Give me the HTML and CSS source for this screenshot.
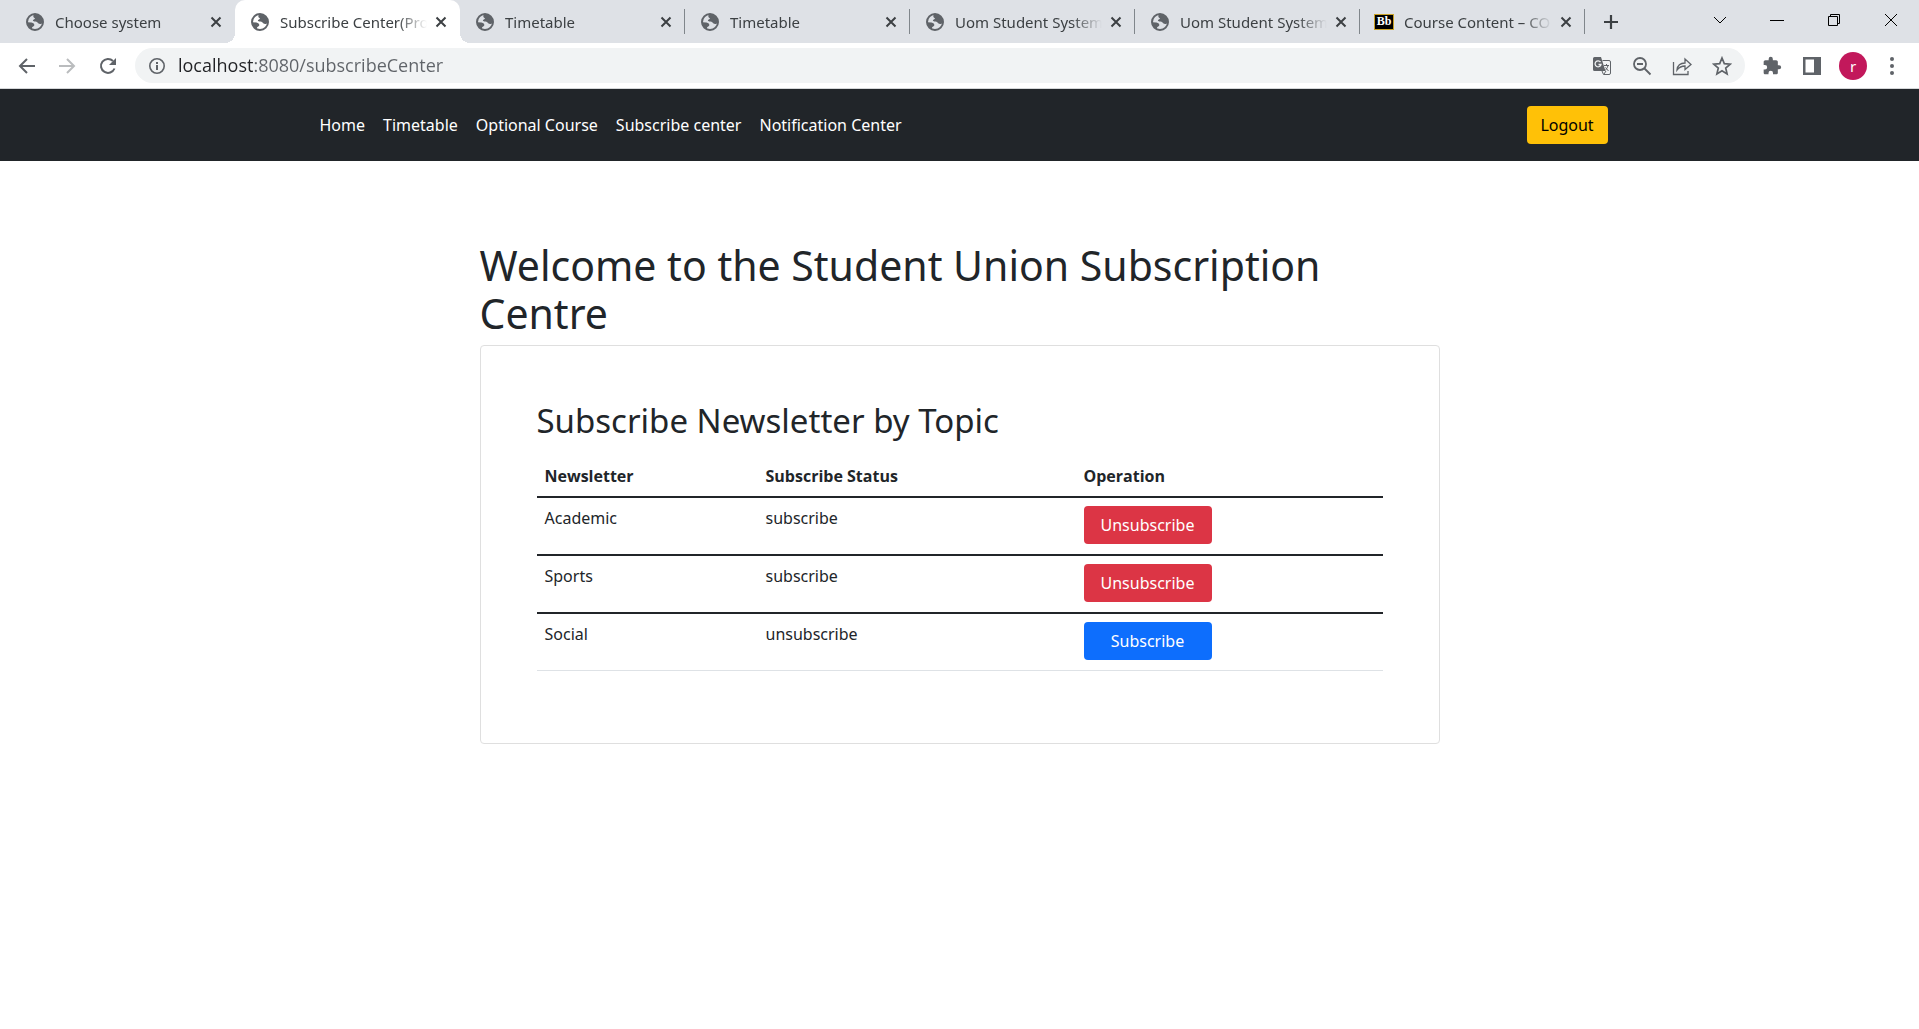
FILE: index.html
```html
<!DOCTYPE html>
<html lang="en">
<head>
<meta charset="utf-8">
<title>Subscribe Center</title>
<link rel="stylesheet" href="styles.css">
</head>
<body>
<svg class="defs" aria-hidden="true">
  <symbol id="globe" viewBox="0 0 18 18">
    <circle cx="9" cy="9" r="8" fill="none" stroke="currentColor" stroke-width="2"/>
    <path fill="currentColor" d="M8 1.500C6.800 3 7.200 4.500 8.800 5.200C9.500 5.600 8.200 6.500 7 7C6.500 8 8 8.600 9.500 8.500C11 8.600 11.500 9.600 12.500 10.600C14 11.600 15.600 11 16.800 9.500C17 5 14 1.500 8 1.500ZM1.500 9.200L5.500 9.500C7.500 10 8.500 11 8.300 12.200C8 13.400 6.400 13.500 6 14.500L6.200 16.400C3 15.500 1.200 12.500 1.500 9.200Z"/>
  </symbol>
  <symbol id="cross" viewBox="0 0 12 12">
    <path d="M1.500 1.500l9 9M10.500 1.500l-9 9" fill="none" stroke="currentColor" stroke-width="2"/>
  </symbol>
</svg>
<header class="browser">
  <div class="tabstrip">
    <div class="tab"><svg class="favicon"><use href="#globe"/></svg><a class="tab-title" href="#">Choose system</a><button class="tab-close" aria-label="Close"><svg><use href="#cross"/></svg></button></div>
    <div class="tab active"><svg class="favicon"><use href="#globe"/></svg><a class="tab-title" href="#">Subscribe Center(Pro</a><button class="tab-close" aria-label="Close"><svg><use href="#cross"/></svg></button></div>
    <div class="tab divided"><svg class="favicon"><use href="#globe"/></svg><a class="tab-title" href="#">Timetable</a><button class="tab-close" aria-label="Close"><svg><use href="#cross"/></svg></button></div>
    <div class="tab divided"><svg class="favicon"><use href="#globe"/></svg><a class="tab-title" href="#">Timetable</a><button class="tab-close" aria-label="Close"><svg><use href="#cross"/></svg></button></div>
    <div class="tab divided"><svg class="favicon"><use href="#globe"/></svg><a class="tab-title" href="#">Uom Student System</a><button class="tab-close" aria-label="Close"><svg><use href="#cross"/></svg></button></div>
    <div class="tab divided"><svg class="favicon"><use href="#globe"/></svg><a class="tab-title" href="#">Uom Student System</a><button class="tab-close" aria-label="Close"><svg><use href="#cross"/></svg></button></div>
    <div class="tab divided"><span class="bb">Bb</span><a class="tab-title" href="#">Course Content – CO</a><button class="tab-close" aria-label="Close"><svg><use href="#cross"/></svg></button></div>
    <button class="new-tab" aria-label="New tab"><svg viewBox="0 0 16 16"><path d="M8 1v14M1 8h14" stroke="currentColor" stroke-width="2.200"/></svg></button>
    <div class="window-controls">
      <button aria-label="Search tabs"><svg viewBox="0 0 14 14"><path d="M1 4l6 6 6-6" fill="none" stroke="currentColor"/></svg></button>
      <button aria-label="Minimize"><svg viewBox="0 0 14 14"><path d="M0 7.500h14" stroke="currentColor"/></svg></button>
      <button aria-label="Restore"><svg viewBox="0 0 14 14"><path d="M1.500 3.500h9v9h-9zM3.500 3.500v-2h9v9h-2" fill="none" stroke="currentColor"/></svg></button>
      <button aria-label="Close window"><svg viewBox="0 0 14 14"><path d="M1 1l12 12M13 1L1 13" stroke="currentColor"/></svg></button>
    </div>
  </div>
  <div class="toolbar">
    <button class="tool" aria-label="Back"><svg viewBox="0 0 20 20"><path d="M18 10H3M10 3l-7 7 7 7" fill="none" stroke="currentColor" stroke-width="2"/></svg></button>
    <button class="tool faded" aria-label="Forward"><svg viewBox="0 0 20 20"><path d="M2 10h15M10 3l7 7-7 7" fill="none" stroke="currentColor" stroke-width="2"/></svg></button>
    <button class="tool" aria-label="Reload"><svg viewBox="0 0 20 20"><path d="M17.500 12.500A7 7 0 1 1 16 5" fill="none" stroke="currentColor" stroke-width="2"/><path d="M19 2v7h-7z" fill="currentColor"/></svg></button>
    <div class="omnibox">
      <svg class="info" viewBox="0 0 18 18"><circle cx="9" cy="9" r="7.200" fill="none" stroke="currentColor" stroke-width="1.600"/><path d="M9 8v5M9 5v2" stroke="currentColor" stroke-width="2"/></svg>
      <input class="address" type="text" aria-label="Address" value="localhost:8080/subscribeCenter">
      <button class="tool" aria-label="Translate"><svg viewBox="0 0 20 20"><path d="M10.500 4.500H17A1.500 1.500 0 0 1 18.500 6v11a1.500 1.500 0 0 1-1.500 1.500h-5.500L10 15" fill="none" stroke="currentColor"/><path d="M2.500 1H9l4.500 14h-11A1.500 1.500 0 0 1 1 13.500v-11A1.500 1.500 0 0 1 2.500 1z" fill="currentColor"/><path d="M8.500 6a3 3 0 1 0 .5 2.500H6.500" fill="none" stroke="#f1f3f4" stroke-width="1.300"/><path d="M12 9.500h5M14.500 8v1.500M16 9.500c-.5 2.500-2 4-3 5M13.500 11.500l3 3.500M14 15l-2 3" fill="none" stroke="currentColor"/></svg></button>
      <button class="tool" aria-label="Zoom"><svg viewBox="0 0 20 20"><circle cx="8" cy="8" r="6" fill="none" stroke="currentColor" stroke-width="1.800"/><path d="M12.500 12.500l6 6M5 8h6" stroke="currentColor" stroke-width="1.800"/></svg></button>
      <button class="tool" aria-label="Share"><svg viewBox="0 0 20 20"><path d="M1.500 6v12.500H16V15M5 14c.5-4.500 3-7 8-7V3l6 5.500-6 5V10c-4 0-6 1.500-8 4z" fill="none" stroke="currentColor" stroke-width="1.300"/></svg></button>
      <button class="tool" aria-label="Bookmark"><svg viewBox="0 0 20 20"><path d="M10 2l2.300 5.600 6 .5-4.600 3.900 1.400 5.900-5.100-3.100-5.100 3.100 1.400-5.900L1.700 8.100l6-.5z" fill="none" stroke="currentColor" stroke-width="1.700"/></svg></button>
    </div>
    <button class="tool" aria-label="Extensions"><svg viewBox="0 0 24 24"><path fill="currentColor" d="M20.500 11H19V7c0-1.100-.9-2-2-2h-4V3.500a2.500 2.500 0 0 0-5 0V5H4c-1.100 0-2 .9-2 2v3.800h1.500a2.700 2.700 0 0 1 0 5.400H2V20c0 1.100.9 2 2 2h3.800v-1.500a2.700 2.700 0 0 1 5.400 0V22H17c1.100 0 2-.9 2-2v-4h1.500a2.500 2.500 0 0 0 0-5z"/></svg></button>
    <button class="tool" aria-label="Side panel"><svg viewBox="0 0 20 20"><path fill="currentColor" fill-rule="evenodd" d="M1 1h18v18H1zM3.500 3.500v13H12v-13z"/></svg></button>
    <button class="avatar" aria-label="Profile">r</button>
    <button class="tool" aria-label="Menu"><svg viewBox="0 0 20 20"><g fill="currentColor"><circle cx="10" cy="3" r="2"/><circle cx="10" cy="10" r="2"/><circle cx="10" cy="17" r="2"/></g></svg></button>
  </div>
</header>
<nav class="navbar">
  <div class="container">
    <div class="links">
      <a href="#">Home</a>
      <a href="#">Timetable</a>
      <a href="#">Optional Course</a>
      <a href="#">Subscribe center</a>
      <a href="#">Notification Center</a>
    </div>
    <button class="btn btn-warning">Logout</button>
  </div>
</nav>
<main class="content">
  <h1>Welcome to the Student Union Subscription Centre</h1>
  <section class="card">
    <h2>Subscribe Newsletter by Topic</h2>
    <table class="table">
      <thead>
        <tr><th class="col-name" scope="col">Newsletter</th><th class="col-status" scope="col">Subscribe Status</th><th scope="col">Operation</th></tr>
      </thead>
      <tbody>
        <tr><td>Academic</td><td>subscribe</td><td><button class="btn btn-danger">Unsubscribe</button></td></tr>
        <tr><td>Sports</td><td>subscribe</td><td><button class="btn btn-danger">Unsubscribe</button></td></tr>
        <tr><td>Social</td><td>unsubscribe</td><td><button class="btn btn-primary">Subscribe</button></td></tr>
      </tbody>
    </table>
  </section>
</main>
</body>
</html>
```
FILE: styles.css
```css
* { box-sizing: border-box; }
body {
  margin: 0;
  background: #fff;
  color: #212529;
  font: 16px/24px "Noto Sans", "Open Sans", sans-serif;
}
button { border: 0; padding: 0; background: none; font: inherit; color: inherit; }
svg { display: block; }
.defs { position: absolute; width: 0; height: 0; }

/* Browser frame */
.browser { border-bottom: 1px solid #d5d7d9; font-size: 15px; }
.tabstrip {
  display: flex;
  height: 43px;
  padding-left: 10px;
  background: #dee1e6;
  color: #3c4043;
}
.tab {
  position: relative;
  display: flex;
  align-items: center;
  flex: 0 1 225px;
  min-width: 0;
  padding: 0 12px 0 16px;
}
.favicon { flex: none; width: 18px; height: 18px; margin-right: 11px; color: #5f6368; }
.tab-title {
  flex: 1;
  min-width: 0;
  overflow: hidden;
  white-space: nowrap;
  color: inherit;
  text-decoration: none;
  -webkit-mask-image: linear-gradient(to right, #000 calc(100% - 30px), transparent);
  mask-image: linear-gradient(to right, #000 calc(100% - 30px), transparent);
}
.tab-close { flex: none; padding: 4px 1px 4px 8px; }
.tab-close svg { width: 12px; height: 12px; }
.active { background: #fff; border-radius: 10px 10px 0 0; }
.active::before, .active::after {
  content: "";
  position: absolute;
  bottom: 0;
  width: 10px;
  height: 10px;
}
.active::before { right: 100%; background: radial-gradient(circle at 0 0, transparent 10px, #fff 10px); }
.active::after { left: 100%; background: radial-gradient(circle at 100% 0, transparent 10px, #fff 10px); }
.divided::after {
  content: "";
  position: absolute;
  right: 0;
  top: 9px;
  width: 1px;
  height: 25px;
  background: #80868b;
}
.bb {
  flex: none;
  width: 20px;
  height: 16px;
  margin: 0 10px 0 -2px;
  border: 1px solid #c9a227;
  background: #000;
  color: #fff;
  font: bold 12px/13px "Liberation Serif", serif;
  text-align: center;
}
.new-tab { padding: 0 18px; }
.new-tab svg { width: 16px; height: 16px; }
.window-controls { display: flex; margin-left: auto; color: #000; }
.window-controls button { display: grid; place-items: center; width: 57px; height: 39px; }
.window-controls svg { width: 14px; height: 14px; }
.toolbar { display: flex; align-items: center; height: 45px; padding: 0 7px; color: #5f6368; }
.tool { display: grid; place-items: center; flex: none; width: 40px; height: 34px; }
.tool svg { width: 20px; height: 20px; }
.faded { color: #babcbe; }
.omnibox {
  display: flex;
  align-items: center;
  flex: 1;
  height: 35px;
  margin: 0 7px 0 8px;
  padding: 0 3px 0 13px;
  border-radius: 18px;
  background: #f1f3f4;
}
.info { flex: none; width: 18px; height: 18px; margin-right: 12px; }
.address {
  flex: 1;
  min-width: 0;
  padding: 0 0 2px;
  border: 0;
  outline: 0;
  font: 18px/24px "Open Sans", "Noto Sans", sans-serif;
  color: #5f6368;
  background: linear-gradient(to right, #202124 76px, #5f6368 76px);
  -webkit-background-clip: text;
  background-clip: text;
  -webkit-text-fill-color: transparent;
}
.avatar {
  flex: none;
  width: 28px;
  height: 28px;
  margin: 0 5px 0 7px;
  border-radius: 50%;
  background: #c2185b;
  color: #fff;
}

/* Site navigation */
.navbar { padding: 16px 0; background: #212529; color: #fff; }
.container {
  display: flex;
  align-items: center;
  justify-content: space-between;
  max-width: 1320px;
  margin: 0 auto;
  padding: 0 12px;
}
.links { display: flex; gap: 2px; }
.links a { padding: 8px; color: inherit; text-decoration: none; }
.btn { padding: 7px 12px; border-radius: 4px; line-height: 24px; }
.btn-warning { min-width: 81px; background: #ffc107; color: #000; }
.btn-danger { background: #dc3545; color: #fff; }
.btn-primary { background: #0d6efd; color: #fff; }

/* Subscription centre */
.content { max-width: 960px; margin: 80px auto; }
h1, h2 { margin: 0 0 8px; font-weight: 400; }
h1 { font-size: 41px; line-height: 48px; }
h2 { font-size: 33px; line-height: 38px; margin-bottom: 16px; }
.card { padding: 56px; border: 1px solid #dfdfdf; border-radius: 4px; }
.table { width: 100%; margin-bottom: 16px; border-collapse: collapse; table-layout: fixed; }
.table th, .table td { padding: 8px; text-align: left; vertical-align: top; border-bottom: 2px solid #212529; }
.table th { font-family: "Open Sans", "Noto Sans", sans-serif; }
.table td { padding-bottom: 10px; }
.table tbody tr:last-child td { border-bottom: 1px solid #dee2e6; }
.table .btn { display: block; width: 128px; }
.col-name { width: 221px; }
.col-status { width: 318px; }
```
